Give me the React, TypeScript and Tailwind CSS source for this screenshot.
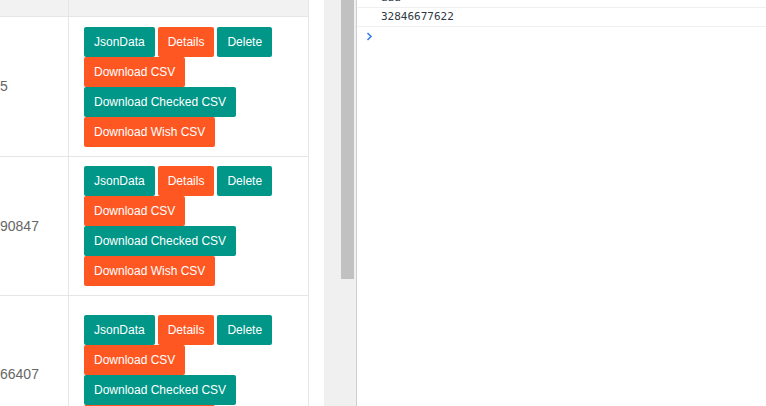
import React from 'react';

const teal = 'bg-[#009688]';
const orange = 'bg-[#FF5722]';

const Btn: React.FC<{ label: string; color: string }> = ({ label, color }) => (
  <button className={`${color} h-[30px] px-[10px] rounded-[2px] text-white text-[12px] leading-[30px] whitespace-nowrap`}>
    {label}
  </button>
);

const rows = [
  { id: '5', h: 'h-[140px]' },
  { id: '90847', h: 'h-[139px]' },
  { id: '66407', h: 'h-[158px]' },
];

const App: React.FC = () => {
  return (
    <div className="w-[766px] h-[406px] overflow-hidden flex bg-white font-['Liberation_Sans',Arial,sans-serif]">
      {/* table */}
      <div className="w-[309px] shrink-0 border-r border-[#e6e6e6] overflow-hidden">
        <div className="h-[17px] flex bg-[#f2f2f2] border-b border-[#e6e6e6]">
          <div className="w-[69px] border-r border-[#e6e6e6]" />
          <div className="flex-1" />
        </div>
        {rows.map((r) => (
          <div key={r.id} className={`${r.h} flex border-b border-[#e6e6e6]`}>
            <div className="w-[69px] shrink-0 border-r border-[#e6e6e6] flex items-center text-[14px] text-[#666]">
              {r.id}
            </div>
            <div className="flex-1 flex items-center pl-[15px] pr-[15px]">
              <div className="flex flex-col">
                <div className="flex gap-[3px]">
                  <Btn label="JsonData" color={teal} />
                  <Btn label="Details" color={orange} />
                  <Btn label="Delete" color={teal} />
                </div>
                <div className="flex">
                  <Btn label="Download CSV" color={orange} />
                </div>
                <div className="flex">
                  <Btn label="Download Checked CSV" color={teal} />
                </div>
                <div className="flex">
                  <Btn label="Download Wish CSV" color={orange} />
                </div>
              </div>
            </div>
          </div>
        ))}
      </div>

      {/* gap + scrollbar */}
      <div className="w-[15px] shrink-0" />
      <div className="w-[33px] shrink-0 bg-[#f0f0f0] border-r border-[#cfcfcf] flex">
        <div className="w-[17px]" />
        <div className="w-[13px] h-[279px] bg-[#c1c1c1]" />
      </div>

      {/* console */}
      <div className="flex-1 flex flex-col font-['DejaVu_Sans_Mono',monospace] text-[11px] text-[#303942]">
        <div className="h-[8px] border-b border-[#f0f0f0] relative overflow-hidden">
          <span className="absolute left-[24px] top-[-11px] leading-[17px]">aaa</span>
        </div>
        <div className="h-[19px] border-b border-[#f0f0f0] pl-[24px] flex items-center">32846677622</div>
        <div className="h-[18px] pl-[9px] flex items-center">
          <svg width="7" height="9" viewBox="0 0 7 9">
            <path d="M1.5 1 L5 4.5 L1.5 8" fill="none" stroke="#367cf1" strokeWidth="1.6" />
          </svg>
        </div>
      </div>
    </div>
  );
};

export default App;
